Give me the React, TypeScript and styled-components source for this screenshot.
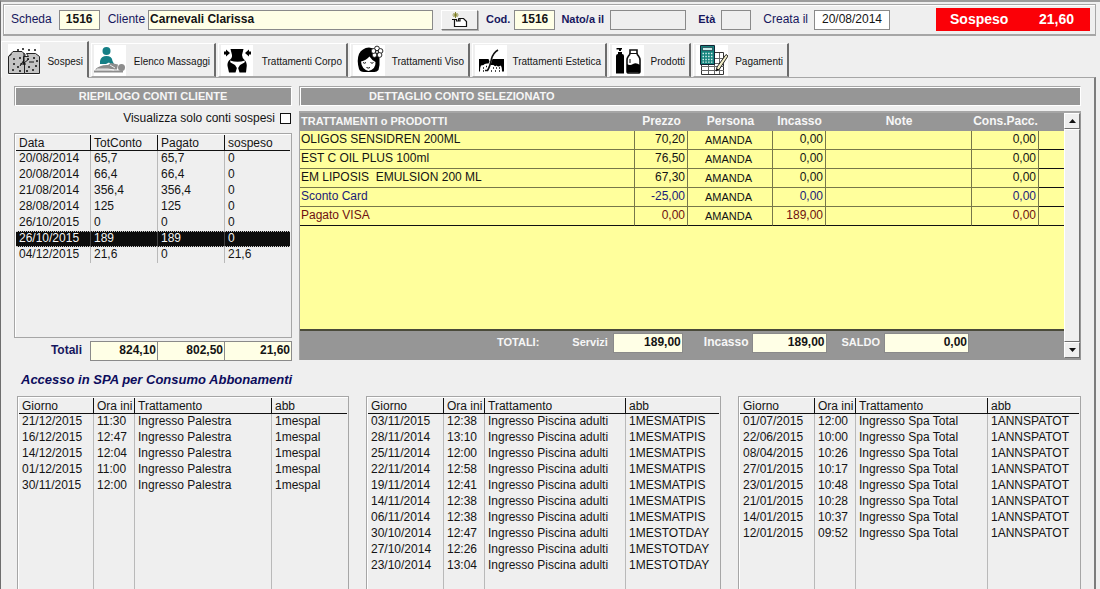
import React, { useState } from "react";
import styled, { createGlobalStyle, css } from "styled-components";

const face = "#efefef";
const grey = "#969696";
const line = "#a6a6a6";
const navy = "#17175e";
const cream = "#ffffe6";
const yellow = "#ffff9c";

const GlobalStyle = createGlobalStyle`
  * { box-sizing: border-box; }
  body {
    margin: 0;
    background: ${face};
    color: #141414;
    font: 12px/16px "Liberation Sans", Arial, sans-serif;
  }
  button, input { font: inherit; color: inherit; }
`;

const Window = styled.div`
  display: flex;
  flex-direction: column;
  min-height: 100vh;
  padding-right: 4px;
  border-top: 2px solid #9c9c9c;
  border-left: 1px solid #6e6e6e;
`;

const ClientBar = styled.form`
  display: flex;
  align-items: center;
  gap: 8px;
  margin: 2px 0 0 2px;
  padding: 3px 5px 3px 7px;
  border: 1px solid ${line};
  border-bottom-width: 2px;
  box-shadow: inset 1px 1px #fff;
`;

const Field = styled.div<{ $gap?: number; $grow?: boolean; $before?: number }>`
  display: flex;
  align-items: center;
  gap: ${(p) => p.$gap ?? 6}px;
  margin-left: ${(p) => p.$before ?? 0}px;
  flex: ${(p) => (p.$grow ? "1 1 200px" : "0 0 auto")};
  min-width: 0;
`;

const FieldLabel = styled.label<{ $bold?: boolean }>`
  padding-bottom: 2px;
  color: ${navy};
  font-size: ${(p) => (p.$bold ? 11 : 12)}px;
  font-weight: ${(p) => (p.$bold ? 700 : 400)};
  white-space: nowrap;
`;

const TextBox = styled.input<{ $width?: number; $fill?: string; $bold?: boolean; $align?: string }>`
  width: ${(p) => (p.$width ? `${p.$width}px` : "100%")};
  min-width: 0;
  height: 20px;
  padding: 0 1px 2px;
  border: 1px solid #8a8a8a;
  border-radius: 0;
  background: ${(p) => p.$fill ?? cream};
  font-weight: ${(p) => (p.$bold ? 700 : 400)};
  text-align: ${(p) => p.$align ?? "left"};
`;

const NewButton = styled.button`
  display: flex;
  align-items: center;
  justify-content: center;
  width: 37px;
  height: 20px;
  padding: 0;
  border: 1px solid;
  border-color: #fff #777 #777 #fff;
  background: ${face};
  box-shadow: 1px 1px #b4b4b4;
`;

const Outstanding = styled.output`
  display: flex;
  align-items: center;
  justify-content: space-between;
  width: 154px;
  height: 23px;
  margin-left: 38px;
  padding: 0 16px 2px 14px;
  background: #fb0007;
  color: #fff;
  font-size: 14px;
  font-weight: 700;
`;

const TabStrip = styled.div`
  display: flex;
  align-items: flex-end;
  gap: 2px;
  margin-top: 5px;
`;

const Tab = styled.button<{ $width: number; $active?: boolean }>`
  display: flex;
  align-items: center;
  justify-content: space-between;
  width: ${(p) => p.$width}px;
  height: 34px;
  padding: 0 4px 0 2px;
  border: 1px solid;
  border-color: #fff #6c6c6c ${line} #fff;
  border-right-width: 2px;
  background: ${face};
  font-size: 10px;
  white-space: nowrap;
  ${(p) =>
    p.$active &&
    css`
      height: 37px;
      padding: 0 4px 0 6px;
      border-bottom-color: ${face};
      position: relative;
      z-index: 1;
      margin-bottom: -1px;
    `}
`;

const TabName = styled.span`
  padding-top: 4px;
`;

const TabIcon = styled.svg`
  display: block;
  flex: none;
  width: 32px;
  height: 31px;
  background: #fff;
`;

const Page = styled.main`
  display: flex;
  flex: 1;
  flex-direction: column;
  padding: 8px 13px 0 13px;
  border-top: 1px solid ${line};
  border-right: 2px solid #7c7c7c;
`;

const Accounts = styled.div`
  display: flex;
  gap: 7px;
`;

const Summary = styled.section`
  display: flex;
  flex-direction: column;
  flex: 0 0 278px;
`;

const Detail = styled.section`
  display: flex;
  flex: 1;
  flex-direction: column;
  min-width: 0;
`;

const Heading = styled.h2<{ $indent?: number }>`
  height: 20px;
  margin: 0;
  padding: 0 0 0 ${(p) => p.$indent ?? 0}px;
  border: 1px solid;
  border-color: ${line} #fff #fff ${line};
  background: ${grey};
  box-shadow: inset 1px 1px #fff;
  color: #f6f6f6;
  font-size: 11px;
  line-height: 18px;
  text-align: ${(p) => (p.$indent ? "left" : "center")};
`;

const OnlyOpen = styled.label`
  display: flex;
  align-items: center;
  justify-content: flex-end;
  gap: 5px;
  height: 27px;
  padding: 0 1px 3px 0;
`;

const Tick = styled.input`
  appearance: none;
  width: 11px;
  height: 11px;
  margin: 0;
  border: 1px solid #111;
  background: #fff;
  &:checked { box-shadow: inset 0 0 0 2px #fff; background: #111; }
`;

const ListFrame = styled.div<{ $open?: boolean }>`
  display: flex;
  align-items: ${(p) => (p.$open ? "stretch" : "flex-start")};
  height: ${(p) => (p.$open ? "auto" : "205px")};
  padding: 1px 1px 0 1px;
  border: 1px solid ${line};
  border-bottom-width: ${(p) => (p.$open ? 0 : 1)}px;
  box-shadow: inset 1px 1px #fff;
`;

const ListTable = styled.table`
  flex: 1;
  width: 100%;
  table-layout: fixed;
  border-collapse: separate;
  border-spacing: 0;

  th, td {
    height: 16px;
    padding: 0 0 0 3px;
    overflow: hidden;
    font-weight: 400;
    line-height: 14px;
    text-align: left;
    white-space: nowrap;
  }
  th { border-bottom: 1px solid #111; }
  th + th { border-left: 1px solid #111; }
  td { padding-bottom: 2px; }
  td + td { border-left: 1px solid #b9b9b9; }
`;

const ListRow = styled.tr<{ $selected?: boolean }>`
  ${(p) =>
    p.$selected &&
    css`
      background: #0d0d0d;
      color: #f4f4f4;
      td { border-top: 1px dotted #ccc; border-bottom: 1px dotted #ccc; line-height: 13px; padding-bottom: 1px; }
      td + td { border-left-color: #444; }
    `}
`;

const Filler = styled.tr`
  height: 100%;
`;

const SummaryTotals = styled.div`
  display: flex;
  align-items: center;
  margin-top: 3px;
`;

const SumLabel = styled.span`
  flex: 1;
  padding: 0 9px 2px 0;
  color: ${navy};
  font-weight: 700;
  text-align: right;
`;

const SumBox = styled(TextBox)`
  margin-left: -1px;
`;

const DetailBox = styled.div`
  display: flex;
  height: 249px;
  margin-top: 5px;
  border: solid ${line};
  border-width: 2px 0 0 1px;
`;

const DetailMain = styled.div`
  display: flex;
  flex: 1;
  flex-direction: column;
  min-width: 0;
  background: ${yellow};
`;

const DetailTable = styled.table`
  width: 100%;
  table-layout: fixed;
  border-collapse: separate;
  border-spacing: 0;

  th {
    height: 18px;
    padding: 0 0 1px;
    background: ${grey};
    color: #f6f6f6;
    line-height: 17px;
    white-space: nowrap;
  }
  th:first-child { padding-left: 1px; font-size: 11px; text-align: left; }
  td {
    height: 19px;
    padding: 0 2px 1px 1px;
    border-right: 1px solid #77774a;
    border-bottom: 1px solid #77774a;
    line-height: 17px;
    text-align: right;
    white-space: pre;
  }
  td:first-child { text-align: left; }
  td:nth-child(3) { padding: 1px 3px 0 0; font-size: 11px; text-align: center; }
  td:last-child { border-right: 0; border-bottom-color: #111; }
  tbody tr:last-child td { border-bottom-color: #111; }
`;

const DetailRow = styled.tr<{ $ink?: string }>`
  color: ${(p) => p.$ink ?? "inherit"};
  td:nth-child(3) { color: #141414; }
`;

const DetailTotals = styled.div`
  display: flex;
  align-items: flex-start;
  justify-content: flex-end;
  gap: 15px;
  height: 31px;
  margin-top: auto;
  padding: 2px 95px 0 0;
  border-top: 2px solid #4a4a3a;
  background: ${grey};
`;

const TotalLabel = styled.label<{ $large?: boolean }>`
  padding-bottom: 3px;
  color: #f6f6f6;
  font-size: ${(p) => (p.$large ? 12 : 11)}px;
  font-weight: 700;
`;

const Scroller = styled.div`
  display: flex;
  flex-direction: column;
  width: 17px;
  padding-bottom: 2px;
  border-right: 1px solid ${grey};
  background: ${grey};
`;

const ScrollButton = styled.button`
  display: flex;
  align-items: center;
  justify-content: center;
  height: 16px;
  padding: 0;
  border: 1px solid;
  border-color: #fff #707070 #707070 #fff;
  background: ${face};
`;

const ScrollThumb = styled.div`
  flex: 1;
  border: 1px solid;
  border-color: #fff #707070 #707070 #fff;
  background: ${face};
`;

const SpaTitle = styled.h2`
  margin: 11px 0 8px 7px;
  color: #0c0c5c;
  font-size: 13px;
  font-style: italic;
  line-height: 16px;
`;

const SpaLists = styled.section`
  display: grid;
  flex: 1;
  grid-template-columns: 332fr 355fr 343fr;
  gap: 17px;
  margin-left: 3px;
`;

const IconSospesi = () => (
  <TabIcon viewBox="0 0 32 31" aria-hidden="true">
    <path d="M.5 12.500 5 7.500h9l3 3v19H.5z" fill="#c4c4c4" stroke="#222" />
    <path d="M16.500 29.500v-10h-1v-7h5l-2-3h9l4 3v17z" fill="#c4c4c4" stroke="#222" />
    <path d="M1 12.500 3.500 10M16 9v12M12 20h6M21 18h5M16 16l-4 6M16 19l5-4" stroke="#111" fill="none" />
    <path
      d="M5 15h2M11 14h2M5 20h2M9 23h2M4 26h2M11 27h2M19 15h2M25 14h2M28 17h2M20 23h2M27 22h2M18 27h2M24 26h2M20 6h2M26 6h2M9 6h2M14 5h2"
      stroke="#111"
      strokeWidth="1.600"
    />
  </TabIcon>
);

const IconMassaggi = () => (
  <TabIcon viewBox="0 0 32 31" aria-hidden="true">
    <circle cx="12.500" cy="6" r="4" fill="#157f86" />
    <path d="M6 19v-3q1-5 6.500-5t6 5l1.500 3-3 .5-2-2-3 1.500z" fill="#157f86" />
    <path d="M1 24.500q5-5 13-4.500l3-2 7 1.500-1 5z" fill="#8d8d8d" />
    <circle cx="27.500" cy="22.500" r="3.500" fill="#8d8d8d" />
    <path d="M0 26.500h29" stroke="#8d8d8d" strokeWidth="2" fill="none" />
    <path d="M3 24h11l6 1M16 20l5 3" stroke="#fff" strokeWidth=".8" fill="none" />
  </TabIcon>
);

const IconCorpo = () => (
  <TabIcon viewBox="0 0 32 31" aria-hidden="true">
    <path d="M9.500 4h13l-1.500 6q0 3 3 5.500 2.500 3 1.500 7.500l-.5 4.500h-6.500L16.500 21l-2 6.500H8L7 23q-1.500-4.500 1-7.500 3.500-2.500 3-5.500z" />
    <path d="M9 15.500q7.500 2.500 15 0l-.5 2-4.500 2.500-2.500 4-2.500-4-4.500-2.500z" fill="#fff" />
    <path d="M3 6.500h2V4.500L9 8l-4 3.500v-2H3zM30 6.500h-2v-2L24 8l4 3.500v-2h2z" />
  </TabIcon>
);

const IconViso = () => (
  <TabIcon viewBox="0 0 32 31" aria-hidden="true">
    <path d="M6 24Q3.500 15 6 9q3-6 10-6.500 10 1 10.500 11 .5 7-1 11.500-2 2.500-5 2L11 27q-4 0-5-3z" />
    <path d="M8 16.500q5-1 8.500-5 3 4.500 6 5.500.5 7-7 9-7-2-7.500-9.500z" fill="#fff" />
    <path d="M10 17.500q1.500 1.500 3 0M17.500 17.500q1.500 1.500 3 0M13.500 22.500q1.800 1.200 3.500 0" stroke="#111" fill="none" />
    <g fill="#fff" stroke="#111" strokeWidth=".9">
      <circle cx="24" cy="3.500" r="2.400" />
      <circle cx="27.500" cy="6" r="2.400" />
      <circle cx="26.500" cy="10" r="2.400" />
      <circle cx="21.500" cy="10" r="2.400" />
      <circle cx="20.500" cy="6" r="2.400" />
      <circle cx="24" cy="7" r="1.500" />
    </g>
  </TabIcon>
);

const IconEstetica = () => (
  <TabIcon viewBox="0 0 32 31" aria-hidden="true">
    <path d="M4 14h9.500l1 2.500-1 2q-4-.5-5 1.500l-2.500.5Q5 22 5 26.500H4zM17.500 14H29v12.500h-2q0-5-1.500-6-2 2-4 0-1.500 1.500-3-.5h-3z" />
    <path d="M23 5Q18 8 16.500 14 15 21.500 12.500 25.500H10" stroke="#111" strokeWidth="1.600" fill="none" />
    <path d="M8 23h1M11 21.500h1M8 26h1M18 23h1M21 23h1M24 23h1M16 26h1M20 26h1M24 26h1" stroke="#111" strokeWidth="1.500" />
  </TabIcon>
);

const IconProdotti = () => (
  <TabIcon viewBox="0 0 32 31" aria-hidden="true">
    <path d="M4 11q0-2 2-2V7h4v2q2 0 2 2v17.500H4zM7 3h2v3H7zM4.500 3H10v1.500H4.500z" />
    <path d="M18 5h7v3q0 2 1.500 3 1.500 2 1.500 4v11.500q0 1.500-2 1.500h-9q-2 0-2-1.500V15q0-2 1.500-4Q18 10 18 8z" fill="#fff" stroke="#111" strokeWidth="1.600" />
    <path d="M15 19q3 2 6 0t7 1v7.500H15z" />
    <path d="M18 8.500h7M18 14v4" stroke="#111" />
  </TabIcon>
);

const IconPagamenti = () => (
  <TabIcon viewBox="0 0 32 31" aria-hidden="true">
    <path d="M5.500 7.500h22v22h-22z" fill="#fff" stroke="#333" />
    <path d="M5 13.500h23M5 18.500h23M5 21.500h23M5 25.500h23M12.500 8v21M18.500 8v21M23.500 8v21" stroke="#666" />
    <path d="M4.500.5h14v19h-14z" fill="#14827c" stroke="#123" />
    <path d="M6.500 2.500h10v3h-10z" fill="#c9ecea" stroke="#123" strokeWidth=".6" />
    <path d="M6.500 8.500h10M6.500 11.500h10M6.500 14.500h10M6.500 17.200h10" stroke="#d6f0ee" strokeWidth="1.300" strokeDasharray="1.500 1.300" />
    <path d="m20 26 1-4L30 9.500l2 1.500-8.500 13z" fill="#f3efc8" stroke="#111" strokeWidth=".9" />
    <path d="m20 26 1-2.500 1.500 1z" />
  </TabIcon>
);

const NewIcon = () => (
  <svg width="17" height="16" viewBox="0 0 17 16" aria-hidden="true">
    <path d="M3.500 7.500v7h12v-5l-3-3H9V9H5.500V7.500z" fill="#fff" stroke="#111" strokeWidth="1.200" />
    <path d="M1 7.500h4M7.500 9V6.500h3" stroke="#111" fill="none" />
    <path d="M4.500 0v6M1.500 3h6M2.500 1l4 4M6.500 1l-4 4" stroke="#77771a" strokeWidth=".9" />
  </svg>
);

const Arrow = ({ down }: { down?: boolean }) => (
  <svg width="7" height="4" viewBox="0 0 7 4" aria-hidden="true">
    <path d={down ? "M0 0h7L3.500 4z" : "M0 4h7L3.500 0z"} fill="#111" />
  </svg>
);

const tabs = [
  { name: "Sospesi", width: 88, Icon: IconSospesi },
  { name: "Elenco Massaggi", width: 125, Icon: IconMassaggi },
  { name: "Trattamenti Corpo", width: 130, Icon: IconCorpo },
  { name: "Trattamenti Viso", width: 120, Icon: IconViso },
  { name: "Trattamenti Estetica", width: 135, Icon: IconEstetica },
  { name: "Prodotti", width: 82, Icon: IconProdotti },
  { name: "Pagamenti", width: 96, Icon: IconPagamenti },
];

const accounts = [
  ["20/08/2014", "65,7", "65,7", "0"],
  ["20/08/2014", "66,4", "66,4", "0"],
  ["21/08/2014", "356,4", "356,4", "0"],
  ["28/08/2014", "125", "125", "0"],
  ["26/10/2015", "0", "0", "0"],
  ["26/10/2015", "189", "189", "0"],
  ["04/12/2015", "21,6", "0", "21,6"],
];

const items = [
  { cells: ["OLIGOS SENSIDREN 200ML", "70,20", "AMANDA", "0,00", "", "0,00"] },
  { cells: ["EST C OIL PLUS 100ml", "76,50", "AMANDA", "0,00", "", "0,00"] },
  { cells: ["EM LIPOSIS  EMULSION 200 ML", "67,30", "AMANDA", "0,00", "", "0,00"] },
  { cells: ["Sconto Card", "-25,00", "AMANDA", "0,00", "", "0,00"], ink: "#1b1b78" },
  { cells: ["Pagato VISA", "0,00", "AMANDA", "189,00", "", "0,00"], ink: "#6e1010" },
];

const visits = (treatment: string, rows: string[]) =>
  rows.map((row) => {
    const [day, time, pass] = row.split(" ");
    return [day, time, treatment, pass];
  });

const palestra = visits("Ingresso Palestra", [
  "21/12/2015 11:30 1mespal",
  "16/12/2015 12:47 1mespal",
  "14/12/2015 12:04 1mespal",
  "01/12/2015 11:00 1mespal",
  "30/11/2015 12:00 1mespal",
]);

const piscina = visits("Ingresso Piscina adulti", [
  "03/11/2015 12:38 1MESMATPIS",
  "28/11/2014 13:10 1MESMATPIS",
  "25/11/2014 12:00 1MESMATPIS",
  "22/11/2014 12:58 1MESMATPIS",
  "19/11/2014 12:41 1MESMATPIS",
  "14/11/2014 12:38 1MESMATPIS",
  "06/11/2014 12:38 1MESMATPIS",
  "30/10/2014 12:47 1MESTOTDAY",
  "27/10/2014 12:26 1MESTOTDAY",
  "23/10/2014 13:04 1MESTOTDAY",
]);

const spa = visits("Ingresso Spa Total", [
  "01/07/2015 12:00 1ANNSPATOT",
  "22/06/2015 10:00 1ANNSPATOT",
  "08/04/2015 10:26 1ANNSPATOT",
  "27/01/2015 10:17 1ANNSPATOT",
  "23/01/2015 10:48 1ANNSPATOT",
  "21/01/2015 10:28 1ANNSPATOT",
  "14/01/2015 10:37 1ANNSPATOT",
  "12/01/2015 09:52 1ANNSPATOT",
]);

type ListProps = {
  label: string;
  heads: string[];
  widths: number[];
  rows: string[][];
  open?: boolean;
  selected?: number;
  onSelect?: (index: number) => void;
};

const List = ({ label, heads, widths, rows, open, selected, onSelect }: ListProps) => (
  <ListFrame $open={open}>
    <ListTable aria-label={label}>
      <colgroup>
        {heads.map((head, i) => (
          <col key={head} width={widths[i]} />
        ))}
      </colgroup>
      <thead>
        <tr>
          {heads.map((head) => (
            <th key={head} scope="col">{head}</th>
          ))}
        </tr>
      </thead>
      <tbody>
        {rows.map((row, i) => (
          <ListRow key={i} $selected={i === selected} onClick={() => onSelect?.(i)}>
            {row.map((cell, j) => (
              <td key={j}>{cell}</td>
            ))}
          </ListRow>
        ))}
        {open && (
          <Filler aria-hidden="true">
            {heads.map((head) => (
              <td key={head} />
            ))}
          </Filler>
        )}
      </tbody>
    </ListTable>
  </ListFrame>
);

const visitHeads = ["Giorno", "Ora ini", "Trattamento", "abb"];

export default function App() {
  const [tab, setTab] = useState(0);
  const [selected, setSelected] = useState(5);

  return (
    <>
      <GlobalStyle />
      <Window>
        <ClientBar onSubmit={(e) => e.preventDefault()}>
          <Field $gap={7}>
            <FieldLabel htmlFor="scheda">Scheda</FieldLabel>
            <TextBox id="scheda" $width={41} $bold $align="center" defaultValue="1516" />
          </Field>
          <Field $gap={3} $grow>
            <FieldLabel htmlFor="cliente">Cliente</FieldLabel>
            <TextBox id="cliente" $bold defaultValue="Carnevali Clarissa" />
          </Field>
          <NewButton type="button" aria-label="Nuova scheda">
            <NewIcon />
          </NewButton>
          <Field $gap={4}>
            <FieldLabel htmlFor="cod" $bold>Cod.</FieldLabel>
            <TextBox id="cod" $width={41} $bold $align="center" defaultValue="1516" />
          </Field>
          <Field $before={-2}>
            <FieldLabel htmlFor="nato" $bold>Nato/a il</FieldLabel>
            <TextBox id="nato" $width={76} $fill={face} />
          </Field>
          <Field $before={4}>
            <FieldLabel htmlFor="eta" $bold>Età</FieldLabel>
            <TextBox id="eta" $width={30} $fill={face} />
          </Field>
          <Field $before={4}>
            <FieldLabel htmlFor="creata">Creata il</FieldLabel>
            <TextBox id="creata" $width={76} $fill="#fff" $align="center" defaultValue="20/08/2014" />
          </Field>
          <Outstanding>
            <span>Sospeso</span>
            <span>21,60</span>
          </Outstanding>
        </ClientBar>

        <TabStrip role="tablist">
          {tabs.map(({ name, width, Icon }, i) => (
            <Tab
              key={name}
              type="button"
              role="tab"
              aria-selected={i === tab}
              $width={width}
              $active={i === tab}
              onClick={() => setTab(i)}
            >
              <Icon />
              <TabName>{name}</TabName>
            </Tab>
          ))}
        </TabStrip>

        <Page>
          <Accounts>
            <Summary>
              <Heading>RIEPILOGO CONTI CLIENTE</Heading>
              <OnlyOpen>
                Visualizza solo conti sospesi
                <Tick type="checkbox" />
              </OnlyOpen>
              <List
                label="Conti cliente"
                heads={["Data", "TotConto", "Pagato", "sospeso"]}
                widths={[74, 67, 67, 66]}
                rows={accounts}
                selected={selected}
                onSelect={setSelected}
              />
              <SummaryTotals>
                <SumLabel>Totali</SumLabel>
                <SumBox $width={68} $bold $align="right" readOnly aria-label="Totale conto" value="824,10" />
                <SumBox $width={68} $bold $align="right" readOnly aria-label="Totale pagato" value="802,50" />
                <SumBox $width={68} $bold $align="right" readOnly aria-label="Totale sospeso" value="21,60" />
              </SummaryTotals>
            </Summary>

            <Detail>
              <Heading $indent={69}>DETTAGLIO CONTO SELEZIONATO</Heading>
              <DetailBox>
                <DetailMain>
                  <DetailTable>
                    <colgroup>
                      <col />
                      <col width={53} />
                      <col width={85} />
                      <col width={53} />
                      <col width={146} />
                      <col width={67} />
                      <col width={25} />
                    </colgroup>
                    <thead>
                      <tr>
                        <th scope="col">TRATTAMENTI o PRODOTTI</th>
                        <th scope="col">Prezzo</th>
                        <th scope="col">Persona</th>
                        <th scope="col">Incasso</th>
                        <th scope="col">Note</th>
                        <th scope="col">Cons.Pacc.</th>
                        <th />
                      </tr>
                    </thead>
                    <tbody>
                      {items.map(({ cells, ink }) => (
                        <DetailRow key={cells[0]} $ink={ink}>
                          {cells.map((cell, j) => (
                            <td key={j}>{cell}</td>
                          ))}
                          <td />
                        </DetailRow>
                      ))}
                    </tbody>
                  </DetailTable>
                  <DetailTotals>
                    <Field $gap={33}>
                      <TotalLabel as="span">TOTALI:</TotalLabel>
                      <Field $gap={5}>
                        <TotalLabel htmlFor="servizi">Servizi</TotalLabel>
                        <TextBox id="servizi" $width={70} $bold $align="right" readOnly value="189,00" />
                      </Field>
                    </Field>
                    <Field $gap={3} $before={6}>
                      <TotalLabel htmlFor="incasso" $large>Incasso</TotalLabel>
                      <TextBox id="incasso" $width={75} $bold $align="right" readOnly value="189,00" />
                    </Field>
                    <Field $gap={4}>
                      <TotalLabel htmlFor="saldo">SALDO</TotalLabel>
                      <TextBox id="saldo" $width={85} $bold $align="right" readOnly value="0,00" />
                    </Field>
                  </DetailTotals>
                </DetailMain>
                <Scroller>
                  <ScrollButton type="button" aria-label="Scorri su">
                    <Arrow />
                  </ScrollButton>
                  <ScrollThumb />
                  <ScrollButton type="button" aria-label="Scorri giù">
                    <Arrow down />
                  </ScrollButton>
                </Scroller>
              </DetailBox>
            </Detail>
          </Accounts>

          <SpaTitle>Accesso in SPA per Consumo Abbonamenti</SpaTitle>
          <SpaLists>
            <List open label="Ingressi palestra" heads={visitHeads} widths={[74, 41, 137, 76]} rows={palestra} />
            <List open label="Ingressi piscina" heads={visitHeads} widths={[75, 41, 141, 94]} rows={piscina} />
            <List open label="Ingressi spa" heads={visitHeads} widths={[74, 41, 132, 92]} rows={spa} />
          </SpaLists>
        </Page>
      </Window>
    </>
  );
}
